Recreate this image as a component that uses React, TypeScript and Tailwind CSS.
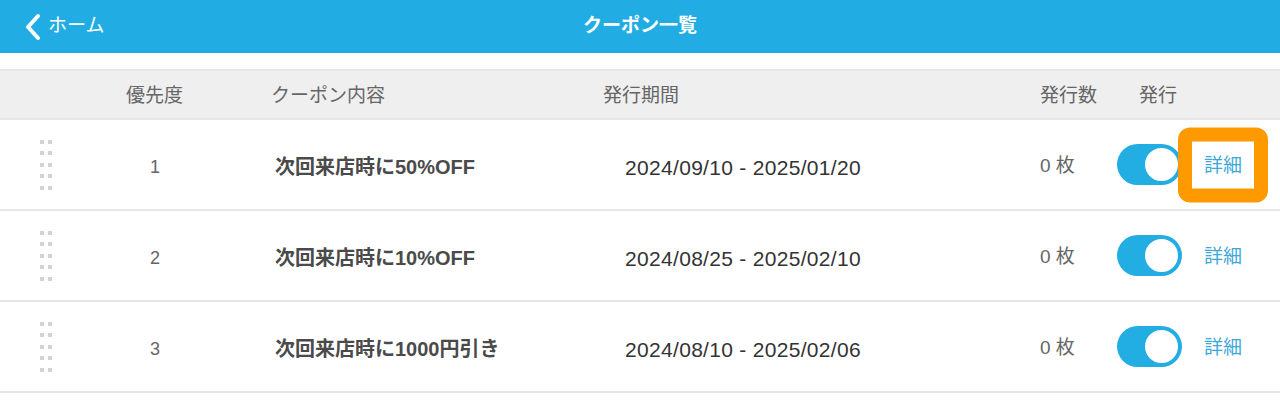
import React from "react";

const FONT = {
  fontFamily: '"Liberation Sans", "Noto Sans CJK JP", sans-serif',
};

type Coupon = {
  priority: number;
  title: string;
  period: string;
  count: string;
  highlighted?: boolean;
};

const COUPONS: Coupon[] = [
  {
    priority: 1,
    title: "次回来店時に50%OFF",
    period: "2024/09/10 - 2025/01/20",
    count: "0 枚",
    highlighted: true,
  },
  {
    priority: 2,
    title: "次回来店時に10%OFF",
    period: "2024/08/25 - 2025/02/10",
    count: "0 枚",
  },
  {
    priority: 3,
    title: "次回来店時に1000円引き",
    period: "2024/08/10 - 2025/02/06",
    count: "0 枚",
  },
];

function DragHandle() {
  return (
    <div className="grid grid-cols-2 gap-x-[4px] gap-y-[7.5px] w-[12px]">
      {Array.from({ length: 10 }).map((_, i) => (
        <span key={i} className="block h-[4px] w-[4px] bg-[#d3d3d3]" />
      ))}
    </div>
  );
}

function Toggle() {
  return (
    <div className="flex h-[41px] w-[65px] items-center justify-end rounded-full bg-[#22ade3] p-[2px]">
      <div className="h-[37px] w-[37px] rounded-full border-[2px] border-[#22ade3] bg-white" />
    </div>
  );
}

function CouponRow({ coupon }: { coupon: Coupon }) {
  return (
    <div className="flex h-[91px] items-center border-b-2 border-[#e6e6e6] bg-white">
      <div className="flex w-[110px] pl-[40px]">
        <DragHandle />
      </div>
      <div className="w-[90px] pt-[5px] text-center text-[18px] text-[#666]">
        {coupon.priority}
      </div>
      <div className="w-[75px]" />
      <div className="w-[328px] pt-[4px] text-[20px] font-bold text-[#4a4a4a]">
        {coupon.title}
      </div>
      <div className="w-[280px] pt-[6px] text-center text-[21px] tracking-[0.3px] text-[#333]">
        {coupon.period}
      </div>
      <div className="w-[157px]" />
      <div className="w-[77px] pt-[4px] text-[19px] text-[#666]">{coupon.count}</div>
      <Toggle />
      <div className="w-[22px]" />
      <span className="relative pt-[4px] text-[19px] text-[#3ea8da]">
        詳細
        {coupon.highlighted ? (
          <span className="absolute left-[-26px] top-1/2 h-[75px] w-[90px] -translate-y-1/2 rounded-[12px] border-[14px] border-[#ff9900]" />
        ) : null}
      </span>
    </div>
  );
}

export default function App() {
  return (
    <div className="h-[419px] w-[1280px] overflow-hidden bg-white" style={FONT}>
      <header className="relative flex h-[53px] items-center bg-[#21ade4] text-white">
        <div className="flex items-center gap-[6px] pl-[24px]">
          <svg width="18" height="28" viewBox="0 0 18 28" fill="none">
            <path
              d="M14 3 L4 14 L14 25"
              stroke="white"
              strokeWidth="4"
              strokeLinecap="round"
              strokeLinejoin="round"
            />
          </svg>
          <span className="text-[19px]">ホーム</span>
        </div>
        <h1 className="absolute left-1/2 -translate-x-1/2 text-[19px] font-bold">
          クーポン一覧
        </h1>
      </header>

      <div className="h-[16px]" />

      <div className="flex h-[51px] items-center border-y-2 border-[#e6e6e6] bg-[#efefef] pt-[3px] text-[19px] text-[#666]">
        <div className="w-[126px]" />
        <div className="w-[145px]">優先度</div>
        <div className="w-[332px]">クーポン内容</div>
        <div className="w-[437px]">発行期間</div>
        <div className="w-[99px]">発行数</div>
        <div>発行</div>
      </div>

      {COUPONS.map((coupon) => (
        <CouponRow key={coupon.priority} coupon={coupon} />
      ))}
    </div>
  );
}
